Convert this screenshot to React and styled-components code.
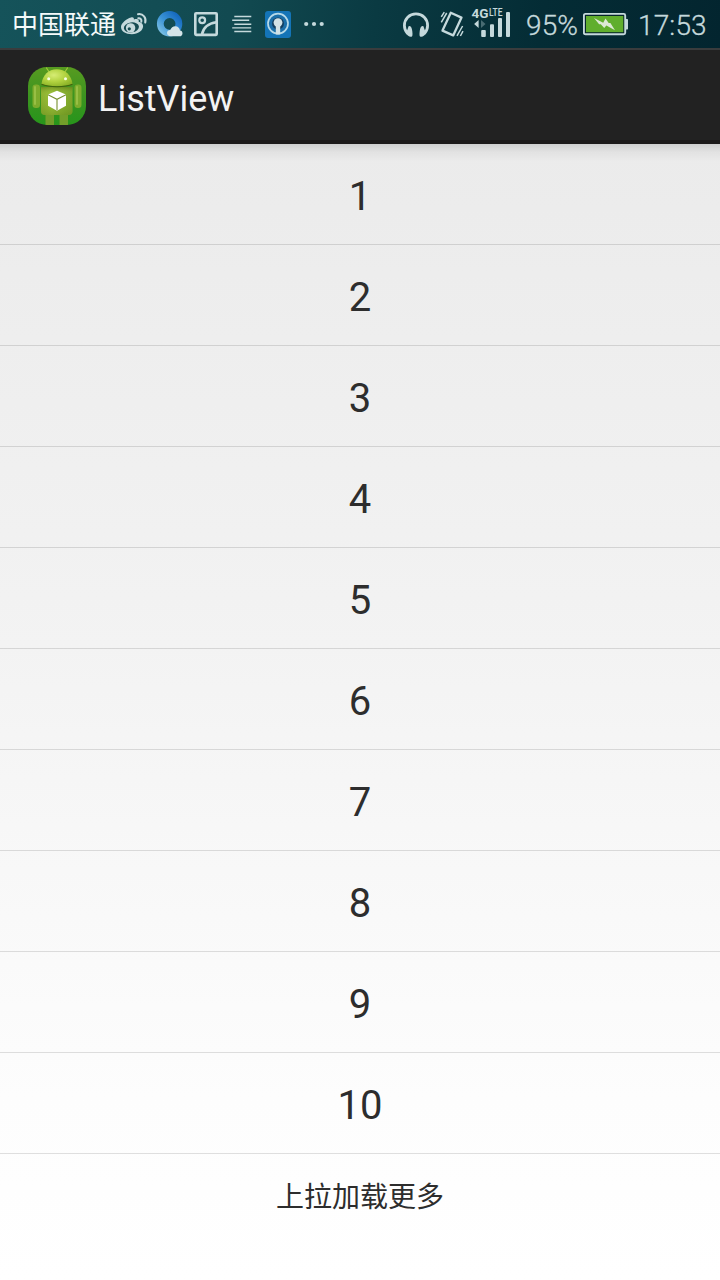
import React from "react";
import styled, { createGlobalStyle } from "styled-components";

const GlobalStyle = createGlobalStyle`
  * { box-sizing: border-box; }
  body { margin: 0; background: #fff; }
`;

const Screen = styled.div`
  width: 720px;
  height: 1280px;
  display: flex;
  flex-direction: column;
  overflow: hidden;
  font-family: Roboto, "Noto Sans CJK SC", sans-serif;
  background: #fff;
`;

const StatusBar = styled.header`
  height: 50px;
  flex: none;
  display: flex;
  align-items: flex-start;
  justify-content: space-between;
  padding: 0 12px 0 12px;
  color: #c5d9dc;
  border-bottom: 2px solid #3a3c3d;
  background: linear-gradient(97deg, #15535a 0%, #124a51 32%, #0a3a42 52%, #042c35 75%, #03252f 100%);
`;

const StatusGroup = styled.div`
  display: flex;
  align-items: center;
  height: 48px;
`;

const Carrier = styled.span`
  font-size: 26px;
  line-height: 46px;
  height: 48px;
  width: 105px;
  color: #f4fafa;
  white-space: nowrap;
  font-family: "Noto Sans CJK SC", sans-serif;
`;

const Reading = styled.span`
  font-size: 28px;
  line-height: 48px;
  width: ${(p) => p.$width}px;
  padding-top: 4px;
  margin-left: ${(p) => p.$gap}px;
  white-space: nowrap;
  font-weight: 300;
  letter-spacing: 0.15px;
  -webkit-text-stroke: 0.3px currentColor;
`;

const Glyph = styled.svg`
  display: block;
  flex: none;
  height: 48px;
  width: ${(p) => p.$width}px;
`;

const ActionBar = styled.div`
  height: 94px;
  flex: none;
  display: flex;
  align-items: center;
  gap: 11px;
  padding: 2px 0 0 27px;
  background: #222;
  border-bottom: 4px solid #1b1919;
`;

const AppIcon = styled.svg`
  display: block;
  width: 60px;
  height: 60px;
`;

const Title = styled.h1`
  margin: 0;
  padding-top: 5px;
  font-size: 36px;
  font-weight: 400;
  line-height: 44px;
  color: #f3f3f3;
`;

const Content = styled.main`
  flex: 1;
  background:
    linear-gradient(rgba(0, 0, 0, 0.13), rgba(0, 0, 0, 0.04) 8px, transparent 18px),
    linear-gradient(#ebebeb, #f2f2f2 40%, #fdfdfd 84%, #fff);
`;

const List = styled.ul`
  list-style: none;
  margin: 0;
  padding: 0;
`;

const Row = styled.li`
  height: 101px;
  padding-top: 5px;
  border-bottom: 1px solid rgba(0, 0, 0, 0.12);
  text-align: center;
  font-size: 40px;
  line-height: 96px;
  color: #2d2d2d;
`;

const LoadMore = styled.div`
  height: 84px;
  text-align: center;
  font-family: "Noto Sans CJK SC", sans-serif;
  font-size: 28px;
  line-height: 82px;
  color: #2d2d2d;
`;

const INK = "#c5d9dc";

function WeiboIcon() {
  return (
    <Glyph $width={36} viewBox="117 0 36 48">
      <path
        fill={INK}
        d="M131 17.500c1.800-.6 3.200 0 2.900 2 3-.9 5.400-.5 4.800 2.200 3 .6 4.400 2.300 4.400 4.600 0 4.300-5.200 8-11.200 8-6.200 0-10.900-2.700-10.900-7.200 0-3.900 5.500-8.500 10-9.600z"
      />
      <ellipse cx="131.400" cy="27.400" rx="7.600" ry="5" fill="#164b52" transform="rotate(-8 131.400 27.400)" />
      <circle cx="130.600" cy="27.900" r="4.700" fill={INK} />
      <circle cx="129.300" cy="28.800" r="1.600" fill="#164b52" />
      <path fill="none" stroke={INK} strokeWidth="2" strokeLinecap="round" d="M138 14.200c5.200-.8 8.600 3.600 7.200 8.400M138.300 18.200c2.300-.2 3.500 1.500 3 3.500" />
    </Glyph>
  );
}

function BrowserIcon() {
  return (
    <Glyph $width={36} viewBox="153 0 36 48">
      <defs>
        <linearGradient id="ring" x1="0" y1="1" x2="1" y2="0">
          <stop offset="0" stopColor="#7cc0e4" />
          <stop offset=".45" stopColor="#3a93d6" />
          <stop offset="1" stopColor="#1266bd" />
        </linearGradient>
      </defs>
      <circle cx="169.600" cy="23.800" r="9.300" fill="none" stroke="url(#ring)" strokeWidth="6.800" />
      <path fill="#d4e4e8" d="M173 36.300c-2.500 0-4-1.300-4-3.200 0-2 1.500-3.100 3.300-3 .8-2.300 2.600-3.800 5-3.800 2.600 0 4.300 1.700 4.700 4.100 1.500 0 2.500 1.100 2.500 2.800 0 1.900-1.200 3.100-3 3.100z" transform="translate(-2 0)" />
    </Glyph>
  );
}

function PictureIcon() {
  return (
    <Glyph $width={36} viewBox="189 0 36 48">
      <g fill="none" stroke={INK} strokeWidth="2.600">
        <rect x="195.300" y="13.300" width="21.400" height="21.600" rx=".8" />
        <circle cx="202.200" cy="20.200" r="2.900" strokeWidth="2.200" />
        <path d="M202 34.500c1.200-6.500 6.300-11.200 14.500-12.200" />
      </g>
    </Glyph>
  );
}

function LinesIcon() {
  return (
    <Glyph $width={36} viewBox="225 0 36 48">
      <path
        stroke={INK}
        strokeWidth="1.400"
        d="M234.300 16.500h17M232.200 20.300h17M234.300 24.200h17M232.200 27.900h19M234.300 31.500h17"
      />
    </Glyph>
  );
}

function KeyholeIcon() {
  return (
    <Glyph $width={36} viewBox="261 0 36 48">
      <rect x="265" y="11" width="26" height="27" rx="3" fill="#1474b7" />
      <circle cx="278" cy="23.600" r="10" fill="#1b6fa9" stroke="#b6d9e8" strokeWidth="1.700" />
      <circle cx="278" cy="23.600" r="6" fill="#143f60" />
      <circle cx="278" cy="22.600" r="4.400" fill="#d2e2e6" />
      <path d="M275.800 24h4.400v10.500h-4.400z" fill="#d2e2e6" />
    </Glyph>
  );
}

function MoreIcon() {
  return (
    <Glyph $width={30} viewBox="297 0 30 48">
      <g fill={INK}>
        <circle cx="306.200" cy="24" r="2.100" />
        <circle cx="314" cy="24" r="2.100" />
        <circle cx="321.700" cy="24" r="2.100" />
      </g>
    </Glyph>
  );
}

function HeadphonesIcon() {
  return (
    <Glyph $width={34} viewBox="400 0 34 48">
      <path fill="none" stroke={INK} strokeWidth="2.800" d="M407.500 33.500c-2-2.200-3.100-4.700-3.100-8 0-6.700 5-11.600 11.600-11.600s11.600 4.900 11.600 11.600c0 3.300-1.100 5.800-3.100 8" />
      <path fill={INK} d="M408.600 26.200c2-.5 3.300 1.500 3.700 5 .4 3.300.3 5.300-.8 5.600-2.300.4-4-1-5.500-3.200zM423.400 26.200c-2-.5-3.300 1.500-3.700 5-.4 3.300-.3 5.300.8 5.600 2.300.4 4-1 5.500-3.200z" />
    </Glyph>
  );
}

function VibrateIcon() {
  return (
    <Glyph $width={36} viewBox="434 0 36 48">
      <g fill="none" stroke={INK}>
        <path strokeWidth="2.300" strokeLinejoin="round" d="M450.800 12.800l10.700 4.800-8.300 17.800-10.700-4.800z" />
        <path strokeWidth="1.500" d="M441.300 16.800l3-4.600M441.300 22.300l5.400-9.300M457 35.800l5.600-9.800M460.400 36l2.600-4.800" />
      </g>
    </Glyph>
  );
}

const NetworkLabel = styled.text`
  font-family: Roboto, sans-serif;
  font-weight: ${(p) => p.$weight};
  font-size: ${(p) => p.$size}px;
  fill: ${INK};
`;

function SignalIcon() {
  return (
    <Glyph $width={44} viewBox="470 0 44 48">
      <NetworkLabel x="471.500" y="17.600" $weight={700} $size={13} textLength="17" lengthAdjust="spacingAndGlyphs">
        4G
      </NetworkLabel>
      <NetworkLabel x="489" y="16" $weight={500} $size={10.500} textLength="13.500" lengthAdjust="spacingAndGlyphs">
        LTE
      </NetworkLabel>
      <g fill={INK}>
        <path d="M478.600 20v8l-4.500-4z" />
        <path d="M481 20v8l4.500-4z" opacity=".35" />
        <rect x="481.200" y="30" width="4.600" height="7" rx="1" />
        <rect x="490" y="24.300" width="4" height="12.700" rx="1" />
        <rect x="498" y="18" width="4" height="19" rx="1" />
        <rect x="506" y="12" width="4" height="25" rx="1" />
      </g>
    </Glyph>
  );
}

function BatteryIcon() {
  return (
    <Glyph $width={46} viewBox="583 0 46 48">
      <path fill={INK} d="M626 19h1.300q.7 0 .7.700v9q0 .7-.7.700H626z" />
      <rect x="583.900" y="13.900" width="41.300" height="20.400" rx="1.500" fill="#06252a" stroke={INK} strokeWidth="1.900" />
      <rect x="586" y="16" width="37.300" height="16.200" fill="#60ae2d" />
      <path fill="#dce8d5" d="M594 18l9.200 4.700 2.300-4.200 3.200 4.600 1.700-.2 4.600 7.400-8.600-4.900-2.200 2.700-3.400-3.900-1.700.1z" />
    </Glyph>
  );
}

function LauncherIcon() {
  return (
    <AppIcon viewBox="27 66 60 60">
      <defs>
        <linearGradient id="tile" x1="0" y1="0" x2="0" y2="1">
          <stop offset="0" stopColor="#579b20" />
          <stop offset=".5" stopColor="#3c9420" />
          <stop offset="1" stopColor="#27951b" />
        </linearGradient>
        <linearGradient id="torso" x1="0" y1="0" x2="1" y2="0">
          <stop offset="0" stopColor="#8cb030" />
          <stop offset=".35" stopColor="#9cc13a" />
          <stop offset="1" stopColor="#7aa428" />
        </linearGradient>
        <linearGradient id="shade" x1="0" y1="0" x2="0" y2="1">
          <stop offset="0" stopColor="#536e13" stopOpacity=".5" />
          <stop offset=".25" stopColor="#8ab12c" stopOpacity="0" />
          <stop offset="1" stopColor="#587c15" stopOpacity=".4" />
        </linearGradient>
        <radialGradient id="head" cx=".4" cy=".35" r=".75">
          <stop offset="0" stopColor="#d6ec74" />
          <stop offset=".5" stopColor="#b2d340" />
          <stop offset="1" stopColor="#86ae24" />
        </radialGradient>
        <clipPath id="tileClip">
          <rect x="28" y="67" width="58" height="58" rx="19" />
        </clipPath>
      </defs>
      <g clipPath="url(#tileClip)">
        <rect x="28" y="67" width="58" height="58" fill="url(#tile)" />
        <rect x="45.500" y="112" width="8.500" height="16" fill="#739e2a" />
        <rect x="59.500" y="112" width="8.500" height="16" fill="#739e2a" />
        <rect x="32.500" y="84.500" width="7.500" height="23.500" rx="3.200" fill="#7dab2c" />
        <rect x="74.500" y="84.500" width="7" height="23.500" rx="3.200" fill="#7dab2c" />
        <path d="M35 87v17M77 87v17" stroke="#98bf44" strokeWidth="2" strokeLinecap="round" />
        <path d="M41 87h31.500v24q0 4-4 4H45q-4 0-4-4z" fill="url(#torso)" />
        <path d="M41 87h31.500v24q0 4-4 4H45q-4 0-4-4z" fill="url(#shade)" />
        <path d="M46.500 68l3 4.500M67.500 68l-3 4.500" stroke="#a3c63c" strokeWidth="1.200" strokeLinecap="round" />
        <path d="M41.500 84c1-9 7-14.800 15.300-14.800S71.500 75 72.500 84c-7 3-24 3-31 0z" fill="url(#head)" />
        <path d="M41.500 84.300c7 3.200 24 3.200 31 0" fill="none" stroke="#42640e" strokeWidth="1.100" />
        <circle cx="48.700" cy="78.800" r="1.500" fill="#f7ffe6" />
        <circle cx="65.500" cy="78.800" r="1.500" fill="#f7ffe6" />
      </g>
      <path d="M57 90.800l9 3.800v11.200l-9 5-9-5V94.600z" fill="#fff" />
      <path d="M48 94.800l9 4.500 9-4.500M57 99.300v11" fill="none" stroke="#77912f" strokeWidth="1.100" />
    </AppIcon>
  );
}

const rows = Array.from({ length: 10 }, (_, i) => i + 1);

export default function App() {
  return (
    <Screen>
      <GlobalStyle />
      <StatusBar>
        <StatusGroup>
          <Carrier>中国联通</Carrier>
          <WeiboIcon />
          <BrowserIcon />
          <PictureIcon />
          <LinesIcon />
          <KeyholeIcon />
          <MoreIcon />
        </StatusGroup>
        <StatusGroup>
          <HeadphonesIcon />
          <VibrateIcon />
          <SignalIcon />
          <Reading $width={57} $gap={12}>95%</Reading>
          <BatteryIcon />
          <Reading $width={70} $gap={9}>17:53</Reading>
        </StatusGroup>
      </StatusBar>
      <ActionBar>
        <LauncherIcon />
        <Title>ListView</Title>
      </ActionBar>
      <Content>
        <List>
          {rows.map((n) => (
            <Row key={n}>{n}</Row>
          ))}
        </List>
        <LoadMore>上拉加载更多</LoadMore>
      </Content>
    </Screen>
  );
}
